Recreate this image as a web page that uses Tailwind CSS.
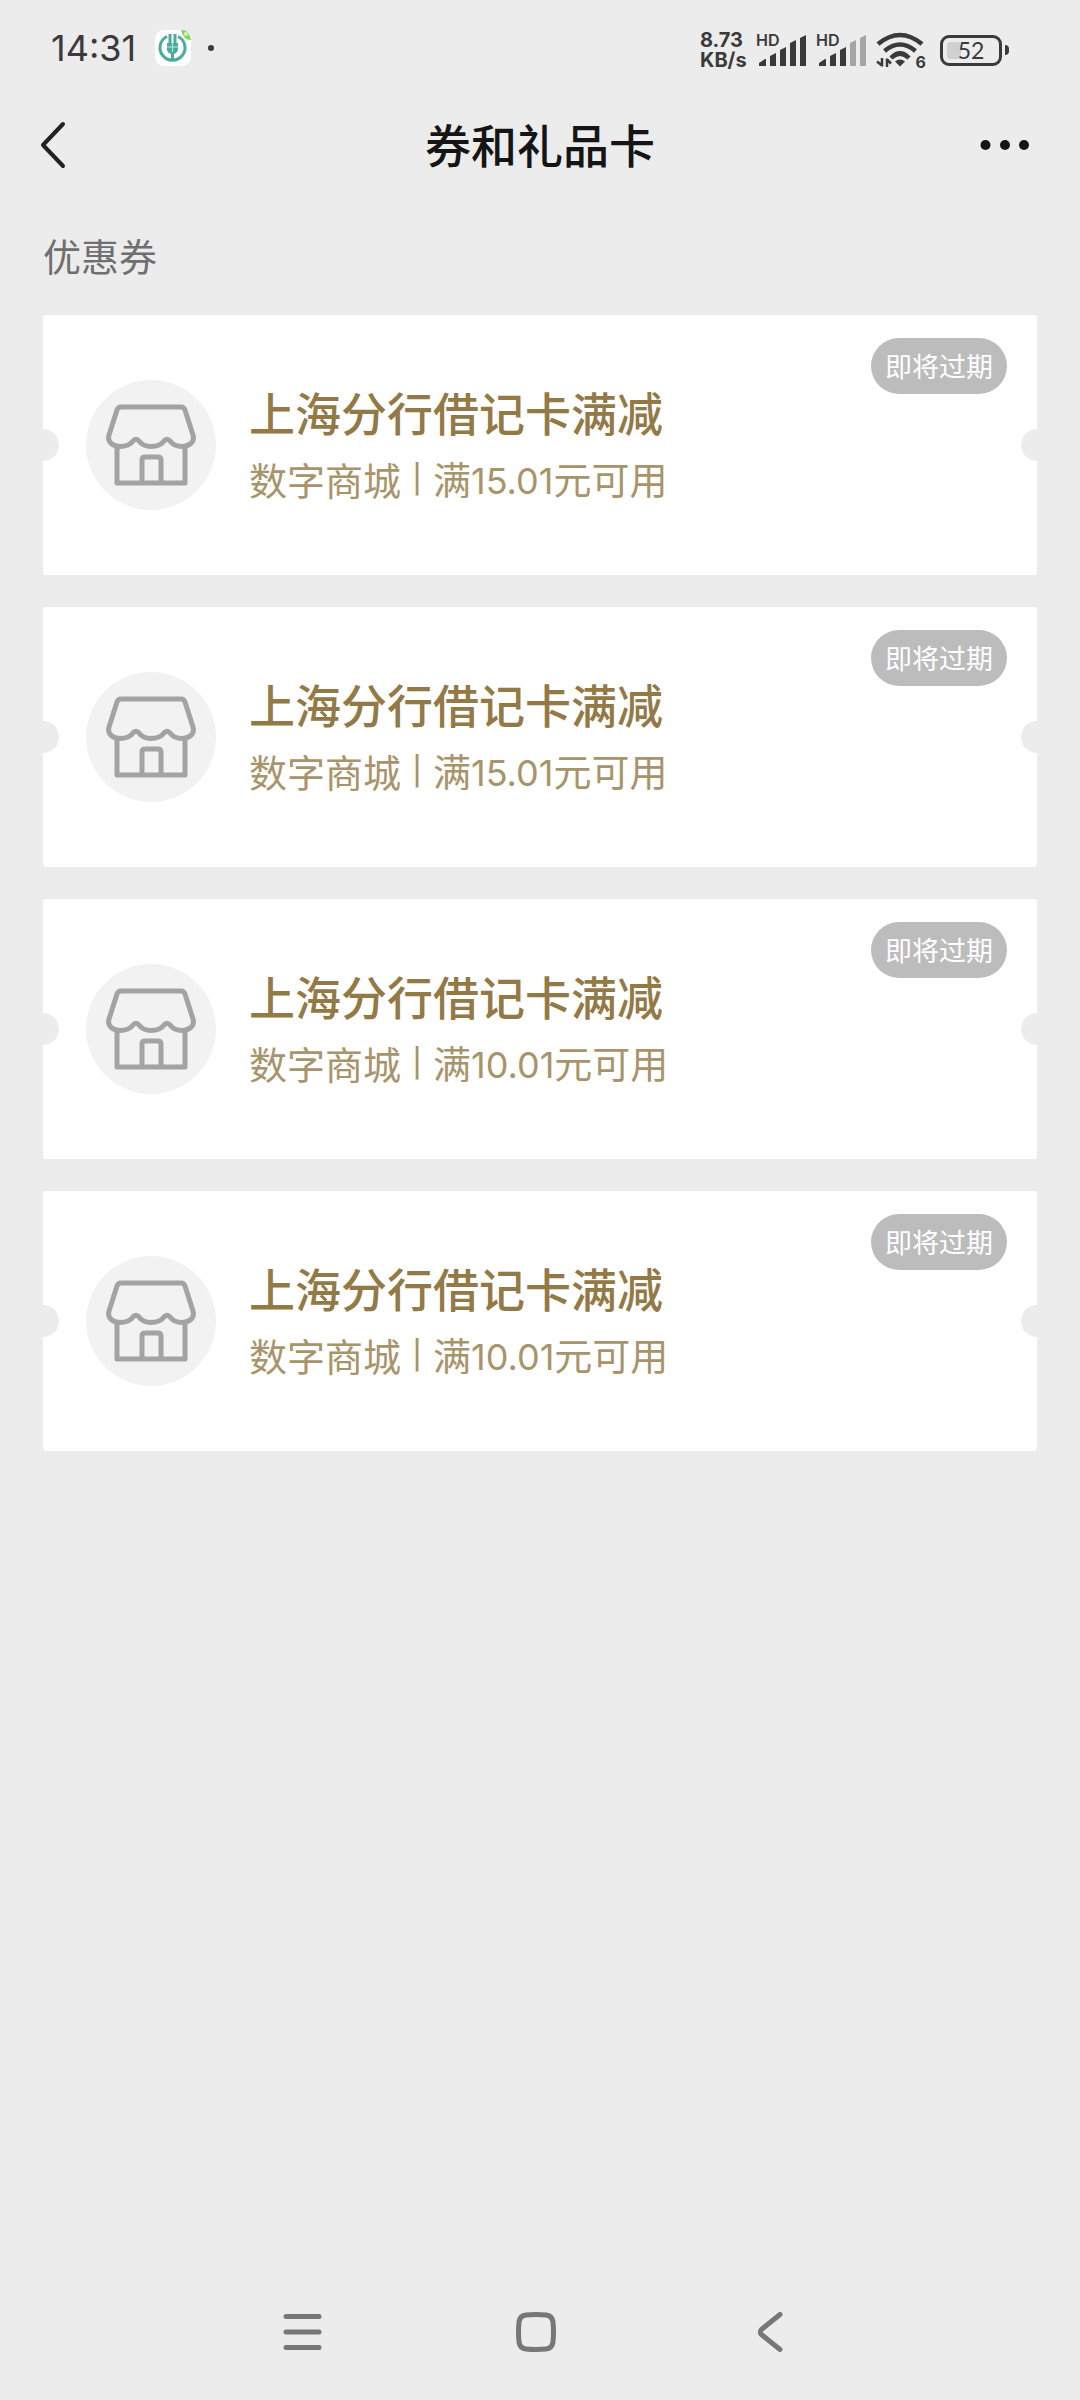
<!DOCTYPE html>
<html lang="zh-CN">
<head>
<meta charset="utf-8">
<meta name="viewport" content="width=device-width, initial-scale=1">
<title>券和礼品卡</title>
<script src="https://cdn.jsdelivr.net/npm/@tailwindcss/browser@4"></script>
</head>
<body class="flex min-h-screen flex-col bg-[#ececec] font-['Noto_Sans_CJK_SC',sans-serif]">

<!-- Status bar -->
<div class="flex h-24 items-center justify-between pr-[71px] pl-[51px] font-[Inter,sans-serif] text-[#3a3a3a]">
  <div class="flex items-center">
    <span class="text-[36px] leading-9">14:31</span>
    <svg class="ml-[18px] h-[38px] w-[38px]" viewBox="0 0 38 38" fill="none" aria-hidden="true">
      <rect x="1" y="1" width="36" height="36" rx="9" fill="#fff"/>
      <path d="M13 7.500A12.500 12.500 0 1 0 24 7.500" stroke="#4bab9e" stroke-width="3"/>
      <path d="M16 5v9M21 5v9M18.500 22v9" stroke="#4bab9e" stroke-width="3"/>
      <path d="M13 14h11v7q-1 4-5.500 4t-5.500-4z" fill="#4bab9e"/>
      <path d="M13 18h11M18.500 14v9" stroke="#bfe3dd" stroke-width="1"/>
      <path d="M27 1q8-1 10 10q-8 0-10-10z" fill="#7ed957"/>
      <circle cx="32" cy="5" r="2" fill="#d6f7bd"/>
    </svg>
    <span class="ml-4 h-[6px] w-[6px] rounded-full bg-[#3a3a3a]"></span>
  </div>
  <div class="flex items-center gap-2 pt-1">
    <div class="w-12 text-[20px] leading-5 font-bold whitespace-nowrap"><div>8.73</div><div>KB/s</div></div>
    <div class="relative h-9 w-[52px]">
      <span class="absolute top-0 left-0 text-[16px] leading-4 font-semibold">HD</span>
      <svg class="h-9 w-[52px]" viewBox="0 0 52 36" fill="#3a3a3a" aria-hidden="true"><path d="M3 31l6-4h1v7H3zM14 24l6-3v13h-6zM24 18l6-3v19h-6zM34 11l6-3v26h-6zM44 6l6-3v31h-6z"/></svg>
    </div>
    <div class="relative h-9 w-[52px]">
      <span class="absolute top-0 left-0 text-[16px] leading-4 font-semibold">HD</span>
      <svg class="h-9 w-[52px]" viewBox="0 0 52 36" fill="#3a3a3a" aria-hidden="true"><path d="M3 31l6-4h1v7H3zM14 24l6-3v13h-6zM24 18l6-3v19h-6z"/><path fill="#a5a5a5" d="M34 11l6-3v26h-6zM44 6l6-3v31h-6z"/></svg>
    </div>
    <div class="relative h-9 w-[50px]">
      <svg class="h-9 w-[48px]" viewBox="0 0 48 36" fill="none" stroke="#3a3a3a" aria-hidden="true">
        <path stroke-width="4.500" d="M2 12Q24-6 46 12M8.500 19Q24 6 39.500 19M15 26Q24 17 33 26"/>
        <path fill="#3a3a3a" stroke="none" d="M19 29.500q5-4 10 0l-5 5z"/>
        <path stroke-width="2.500" d="M6 26v8.500M6 33.500l-5-4M11 35v-8.500M11 27.500l4 4"/>
      </svg>
      <span class="absolute right-0 -bottom-[2px] text-[16px] leading-4 font-bold">6</span>
    </div>
    <div class="flex items-center gap-[3px] pl-[6px]">
      <div class="relative h-[31px] w-[62px] rounded-[9px] border-[3px] border-[#3a3a3a] p-1">
        <div class="h-full w-[14px] rounded-[3px] bg-[#d0d0d0]"></div>
        <span class="absolute inset-0 text-center font-[Lato,sans-serif] text-[23px] leading-[25px]">52</span>
      </div>
      <span class="h-[10px] w-1 rounded-r-full bg-[#3a3a3a]"></span>
    </div>
  </div>
</div>

<!-- Title bar -->
<header class="grid h-[98px] grid-cols-[1fr_auto_1fr] items-center px-10">
  <button type="button" aria-label="返回" class="justify-self-start">
    <svg class="h-12 w-7" viewBox="0 0 28 48" fill="none" stroke="#222" stroke-width="4" stroke-linecap="round" stroke-linejoin="round"><path d="M23 3L3 24l20 21"/></svg>
  </button>
  <h1 class="pb-1 text-[46px] leading-[64px] font-medium text-[#151515]">券和礼品卡</h1>
  <button type="button" aria-label="更多" class="justify-self-end pr-[10px]">
    <svg class="h-3 w-[50px]" viewBox="0 0 50 12" fill="#151515"><circle cx="5.500" cy="6" r="5"/><circle cx="25" cy="6" r="5"/><circle cx="44" cy="6" r="5"/></svg>
  </button>
</header>

<main class="px-[43px]">
  <h2 class="pt-[34px] pb-[33px] text-[38px] leading-[54px] text-[#6f6f6f]">优惠券</h2>
  <ul id="coupons" class="flex flex-col gap-8"></ul>
</main>

<template id="coupon">
  <li class="relative flex h-[260px] items-center gap-[33px] overflow-hidden rounded-[3px] bg-white pl-[43px]">
    <span class="absolute top-[114px] -left-4 h-8 w-8 rounded-full bg-[#ececec]"></span>
    <span class="absolute top-[114px] -right-4 h-8 w-8 rounded-full bg-[#ececec]"></span>
    <div class="flex h-[130px] w-[130px] shrink-0 items-center justify-center rounded-full bg-[#f2f2f2]">
      <svg class="h-[82px] w-[90px]" viewBox="0 0 90 82" fill="none" stroke="#a3a3a3" stroke-width="5" stroke-linejoin="round" aria-hidden="true">
        <path d="M15 3H75Q78 3 79 6L87 31C89 38 83 42.500 76 42.500C70 42.500 67 41 64 37Q61 33.500 58 37C55 41 51 42.500 45 42.500C39 42.500 36 41 33 37Q30 33.500 27 37C24 41 20 42.500 14 42.500C7 42.500 1 38 3 31L11 6Q12 3 15 3Z"/>
        <path d="M11 42V79H79V42M36 78V56Q36 53 39 53H52Q55 53 55 56V78"/>
      </svg>
    </div>
    <div class="pb-1">
      <h3 class="text-[46px] leading-[64px] font-medium text-[#937945]">上海分行借记卡满减</h3>
      <p class="mt-2 flex items-center text-[38px] leading-[54px] text-[#a8946a]">
        <span>数字商城</span><span class="w-8 text-center font-[Inter,sans-serif] text-[28px] font-medium">|</span><span>满<span class="amount font-[Inter,sans-serif] text-[36px]"></span>元可用</span>
      </p>
    </div>
    <span class="absolute top-[23px] right-[30px] rounded-full bg-[#bcbcbc] px-[14px] text-[27px] leading-[56px] text-white">即将过期</span>
  </li>
</template>

<!-- System navigation -->
<nav class="mx-auto mt-auto grid h-[136px] w-[710px] max-w-full grid-cols-3 pr-2">
  <button type="button" aria-label="最近任务" class="flex items-center justify-center">
    <svg class="h-10 w-10" viewBox="0 0 40 40" stroke="#777" stroke-width="5" stroke-linecap="round"><path d="M4 4.500h33M4 20h33M4 35.500h33"/></svg>
  </button>
  <button type="button" aria-label="主页" class="flex items-center justify-center">
    <svg class="h-10 w-10" viewBox="0 0 40 40" fill="none" stroke="#777" stroke-width="5"><path d="M10 3Q20 2 30 3Q36 3.500 37 10Q38 20 37 30Q36 36.500 30 37Q20 38 10 37Q4 36.500 3 30Q2 20 3 10Q4 3.500 10 3Z"/></svg>
  </button>
  <button type="button" aria-label="返回上一页" class="flex items-center justify-center">
    <svg class="h-10 w-7" viewBox="0 0 28 40" fill="none" stroke="#777" stroke-width="5" stroke-linecap="round"><path d="M24 2.500L6 17Q2.500 20 6 23L24 37.500"/></svg>
  </button>
</nav>

<script>
  const list = document.getElementById('coupons');
  const template = document.getElementById('coupon');
  for (const amount of ['15.01', '15.01', '10.01', '10.01']) {
    const card = template.content.cloneNode(true);
    card.querySelector('.amount').textContent = amount;
    list.append(card);
  }
</script>
</body>
</html>
